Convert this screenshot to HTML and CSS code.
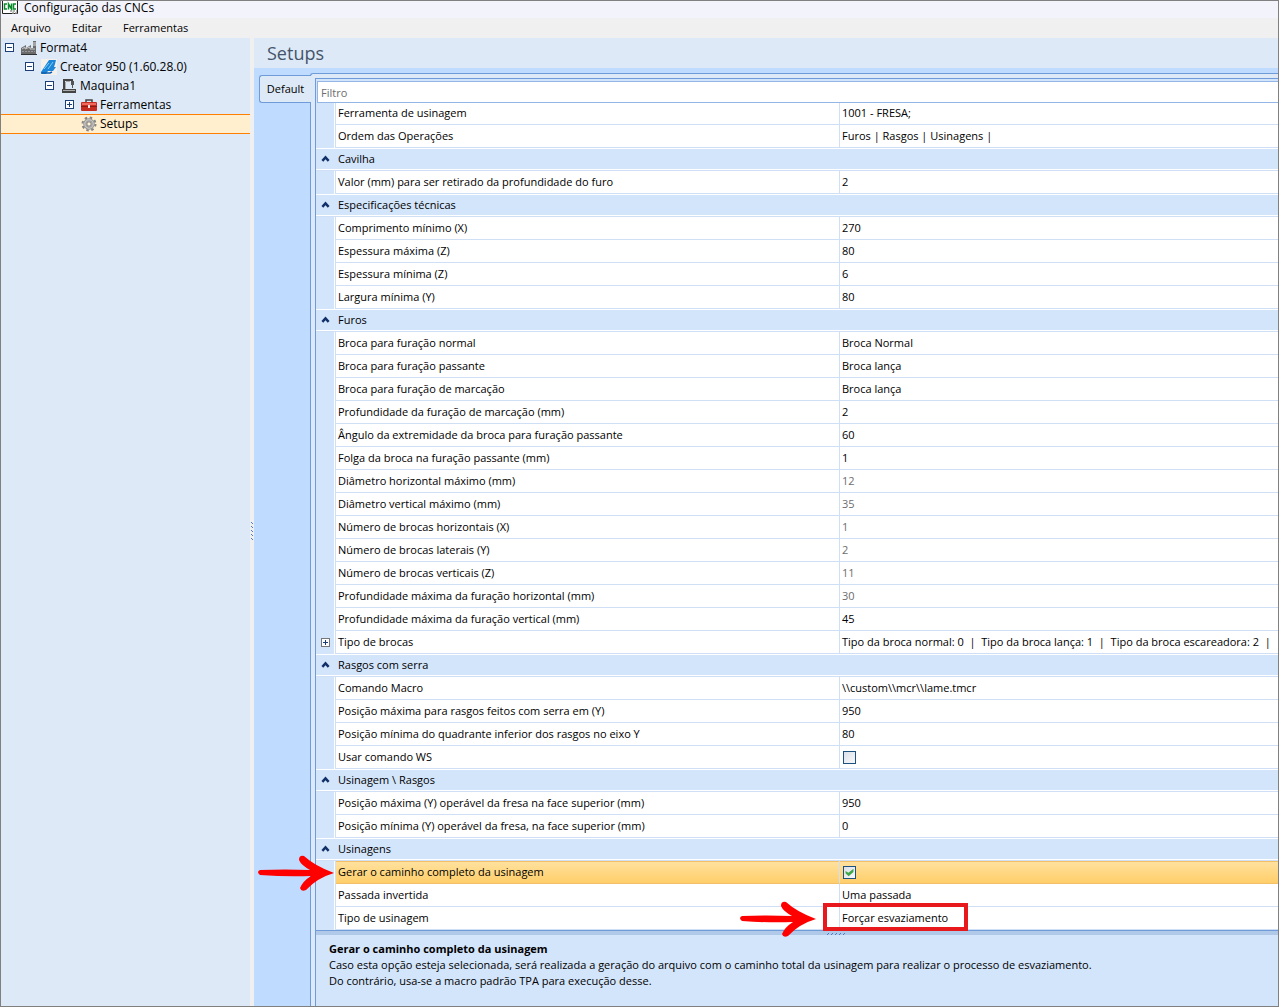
FILE: index.html
```html
<!DOCTYPE html>
<html lang="pt-BR">
  <head>
    <meta charset="utf-8">
    <meta name="viewport" content="width=device-width, initial-scale=1">
    <title>Configuração das CNCs</title>
    <link rel="stylesheet" href="styles.css">
  </head>
  <body>
    <header class="titlebar">
      <svg width="16" height="13" viewBox="0 0 16 13" aria-hidden="true">
        <path d="M0 0v12.500h16V0" fill="#fff"/>
        <path d="M.5 0v12.500h15V0" fill="none" stroke="#222"/>
        <path d="M5 3H2.500v5H5M6.500 8.500V3L9.500 8V2.500M14 3h-2.500v5H14" fill="none" stroke="#0a8a2a" stroke-width="1.500"/>
        <path d="M8 10h7M10 12h5" stroke="#999" stroke-width="1.500" stroke-dasharray="2 1"/>
      </svg>
      <span>Configuração das CNCs</span>
    </header>

    <nav class="menubar">
      <button type="button">Arquivo</button>
      <button type="button">Editar</button>
      <button type="button">Ferramentas</button>
    </nav>

    <main class="workspace">
      <aside class="tree">
        <ul>
          <li>
            <button type="button" class="toggle" aria-label="Recolher Format4"></button>
            <svg width="16" height="16" viewBox="0 0 16 16" aria-hidden="true">
              <path d="M0 15V8l5-3v3l5-3v3h2V1h3v14z" fill="#6b6b6b"/>
              <path d="M1 9l3-2v2l5-2v2h5" fill="none" stroke="#c8c8c8"/>
              <path d="M12 3h3M12 5h3" stroke="#ddd"/>
              <path d="M1 11.500h13" stroke="#999" stroke-dasharray="2 1"/>
              <path d="M0 14.500h16" stroke="#333"/>
            </svg>
            <a href="#format4">Format4</a>
          </li>
          <li class="level-1">
            <button type="button" class="toggle" aria-label="Recolher Creator 950"></button>
            <svg width="16" height="16" viewBox="0 0 16 16" aria-hidden="true">
              <path d="M0 0h16v16H0z" fill="#f4f1ec"/>
              <path d="M0 13L8 1h7l-1 4-1 3h2l-3 4H7l-2 3H1z" fill="#1c86d8"/>
              <path d="M3 10l5-6M7 10l5-7" stroke="#7fd0f7"/>
              <path d="M0 14h9l2-1" fill="none" stroke="#0f5fae" stroke-width="1.500"/>
            </svg>
            <a href="#creator">Creator 950 (1.60.28.0)</a>
          </li>
          <li class="level-2">
            <button type="button" class="toggle" aria-label="Recolher Maquina1"></button>
            <svg width="16" height="16" viewBox="0 0 16 16" aria-hidden="true">
              <path d="M3 12V2h8v3" fill="none" stroke="#444" stroke-width="2"/>
              <path d="M10 3h3v4h-1v3h-1V7h-1z" fill="#555"/>
              <path d="M5 3.500h4M4.500 4v7" stroke="#aaa"/>
              <path d="M1 11h14v4H1z" fill="#444"/>
              <path d="M2 12.500h12" stroke="#aaa"/>
            </svg>
            <a href="#maquina">Maquina1</a>
          </li>
          <li class="level-3">
            <button type="button" class="toggle plus" aria-label="Expandir Ferramentas"></button>
            <svg width="16" height="16" viewBox="0 0 16 16" aria-hidden="true">
              <path d="M5 5V3h6v2" fill="none" stroke="#444" stroke-width="1.500"/>
              <rect x="0" y="5" width="16" height="9" rx="1" fill="#c62c22"/>
              <path d="M1 6h14v2H1z" fill="#ef6a5c"/>
              <path d="M0 9.500h16" stroke="#8d1912"/>
              <path d="M7 8h2v3H7z" fill="#e8e8e8"/>
            </svg>
            <a href="#ferramentas">Ferramentas</a>
          </li>
          <li class="level-3 selected">
            <span class="toggle-space"></span>
            <svg width="16" height="16" viewBox="0 0 16 16" aria-hidden="true">
              <circle cx="8" cy="8" r="6.500" fill="none" stroke="#858585" stroke-width="2" stroke-dasharray="2.500 2.600"/>
              <circle cx="8" cy="8" r="4.200" fill="none" stroke="#8a8a8a" stroke-width="3"/>
              <circle cx="8" cy="8" r="4.200" fill="none" stroke="#c4c4c4" stroke-width="1.500"/>
              <circle cx="8" cy="8" r="2.200" fill="#fff3dd" stroke="#777"/>
            </svg>
            <a href="#setups">Setups</a>
          </li>
        </ul>
      </aside>

      <div class="splitter">
        <svg width="4" height="20" viewBox="0 0 4 20" aria-hidden="true">
          <path d="M1.500 0v20" stroke="#4a7fc8" stroke-dasharray="1 3"/>
          <path d="M2.500 1v19" stroke="#4a7fc8" stroke-dasharray="1 3"/>
        </svg>
      </div>

      <section class="setups">
        <h1>Setups</h1>
        <div class="tabs">
          <div class="tab-strip">
            <button type="button" class="tab">Default</button>
          </div>
          <div class="tab-page">
            <div class="property-grid">
              <input type="text" class="filter" placeholder="Filtro" aria-label="Filtro">
              <table>
                <colgroup>
                  <col class="col-gutter">
                  <col class="col-name">
                  <col>
                </colgroup>
                <tbody>
                  <tr><td></td><th>Ferramenta de usinagem</th><td>1001 - FRESA;</td></tr>
                  <tr><td></td><th>Ordem das Operações</th><td>Furos | Rasgos | Usinagens |</td></tr>
                </tbody>
                <tbody>
                  <tr class="category"><td><button type="button" class="chevron" aria-label="Recolher Cavilha"></button></td><th colspan="2">Cavilha</th></tr>
                  <tr><td></td><th>Valor (mm) para ser retirado da profundidade do furo</th><td>2</td></tr>
                </tbody>
                <tbody>
                  <tr class="category"><td><button type="button" class="chevron" aria-label="Recolher Especificações técnicas"></button></td><th colspan="2">Especificações técnicas</th></tr>
                  <tr><td></td><th>Comprimento mínimo (X)</th><td>270</td></tr>
                  <tr><td></td><th>Espessura máxima (Z)</th><td>80</td></tr>
                  <tr><td></td><th>Espessura mínima (Z)</th><td>6</td></tr>
                  <tr><td></td><th>Largura mínima (Y)</th><td>80</td></tr>
                </tbody>
                <tbody>
                  <tr class="category"><td><button type="button" class="chevron" aria-label="Recolher Furos"></button></td><th colspan="2">Furos</th></tr>
                  <tr><td></td><th>Broca para furação normal</th><td>Broca Normal</td></tr>
                  <tr><td></td><th>Broca para furação passante</th><td>Broca lança</td></tr>
                  <tr><td></td><th>Broca para furação de marcação</th><td>Broca lança</td></tr>
                  <tr><td></td><th>Profundidade da furação de marcação (mm)</th><td>2</td></tr>
                  <tr><td></td><th>Ângulo da extremidade da broca para furação passante</th><td>60</td></tr>
                  <tr><td></td><th>Folga da broca na furação passante (mm)</th><td>1</td></tr>
                  <tr class="readonly"><td></td><th>Diâmetro horizontal máximo (mm)</th><td>12</td></tr>
                  <tr class="readonly"><td></td><th>Diâmetro vertical máximo (mm)</th><td>35</td></tr>
                  <tr class="readonly"><td></td><th>Número de brocas horizontais (X)</th><td>1</td></tr>
                  <tr class="readonly"><td></td><th>Número de brocas laterais (Y)</th><td>2</td></tr>
                  <tr class="readonly"><td></td><th>Número de brocas verticais (Z)</th><td>11</td></tr>
                  <tr class="readonly"><td></td><th>Profundidade máxima da furação horizontal (mm)</th><td>30</td></tr>
                  <tr><td></td><th>Profundidade máxima da furação vertical (mm)</th><td>45</td></tr>
                  <tr><td><button type="button" class="toggle plus" aria-label="Expandir Tipo de brocas"></button></td><th>Tipo de brocas</th><td>Tipo da broca normal: 0&nbsp; |&nbsp; Tipo da broca lança: 1&nbsp; |&nbsp; Tipo da broca escareadora: 2&nbsp; |</td></tr>
                </tbody>
                <tbody>
                  <tr class="category"><td><button type="button" class="chevron" aria-label="Recolher Rasgos com serra"></button></td><th colspan="2">Rasgos com serra</th></tr>
                  <tr><td></td><th>Comando Macro</th><td>\\custom\\mcr\\lame.tmcr</td></tr>
                  <tr><td></td><th>Posição máxima para rasgos feitos com serra em (Y)</th><td>950</td></tr>
                  <tr><td></td><th>Posição mínima do quadrante inferior dos rasgos no eixo Y</th><td>80</td></tr>
                  <tr><td></td><th><label for="usar-ws">Usar comando WS</label></th><td><input type="checkbox" id="usar-ws"></td></tr>
                </tbody>
                <tbody>
                  <tr class="category"><td><button type="button" class="chevron" aria-label="Recolher Usinagem e Rasgos"></button></td><th colspan="2">Usinagem \ Rasgos</th></tr>
                  <tr><td></td><th>Posição máxima (Y) operável da fresa na face superior (mm)</th><td>950</td></tr>
                  <tr><td></td><th>Posição mínima (Y) operável da fresa, na face superior (mm)</th><td>0</td></tr>
                </tbody>
                <tbody>
                  <tr class="category"><td><button type="button" class="chevron" aria-label="Recolher Usinagens"></button></td><th colspan="2">Usinagens</th></tr>
                  <tr class="active">
                    <td></td>
                    <th>
                      <label for="caminho">Gerar o caminho completo da usinagem</label>
                      <svg class="arrow" width="78" height="38" viewBox="0 0 78 38" aria-hidden="true">
                        <path d="M3 16Q28 15 53 16Q44 11 42 6Q42 1 47 2Q58 12 77 19Q60 24 49 36Q44 38 43 34Q46 27 54 22Q30 23 3 21Q-1 18 3 16z"/>
                      </svg>
                    </th>
                    <td><input type="checkbox" id="caminho" checked></td>
                  </tr>
                  <tr><td></td><th>Passada invertida</th><td>Uma passada</td></tr>
                  <tr>
                    <td></td>
                    <th>Tipo de usinagem</th>
                    <td>
                      Forçar esvaziamento
                      <svg class="arrow" width="78" height="38" viewBox="0 0 78 38" aria-hidden="true">
                        <path d="M3 16Q28 15 53 16Q44 11 42 6Q42 1 47 2Q58 12 77 19Q60 24 49 36Q44 38 43 34Q46 27 54 22Q30 23 3 21Q-1 18 3 16z"/>
                      </svg>
                      <span class="marker"></span>
                    </td>
                  </tr>
                </tbody>
              </table>
              <div class="help-splitter">
                <svg width="20" height="3" viewBox="0 0 20 3" aria-hidden="true">
                  <path d="M0 2.500h20" stroke="#4a7fc8" stroke-dasharray="1 3"/>
                  <path d="M1 1.500h19" stroke="#4a7fc8" stroke-dasharray="1 3"/>
                </svg>
              </div>
              <div class="help">
                <h2>Gerar o caminho completo da usinagem</h2>
                <p>Caso esta opção esteja selecionada, será realizada a geração do arquivo com o caminho total da usinagem para realizar o processo de esvaziamento.</p>
                <p>Do contrário, usa-se a macro padrão TPA para execução desse.</p>
              </div>
            </div>
          </div>
        </div>
      </section>
    </main>
  </body>
</html>
```

FILE: styles.css
```css
* {
  box-sizing: border-box;
}

body {
  margin: 0;
  min-height: 100vh;
  display: flex;
  flex-direction: column;
  border: 1px solid #808080;
  font-family: "Open Sans", "Noto Sans", sans-serif;
  font-size: 11px;
  line-height: 16px;
  color: #000;
  background: #dde9f7;
}

button, input {
  font: inherit;
  color: inherit;
  margin: 0;
}
button {
  padding: 0;
  border: none;
  background: none;
}
svg {
  display: block;
  flex-shrink: 0;
}

.titlebar {
  display: flex;
  align-items: center;
  gap: 6px;
  height: 17px;
  padding: 0 1px 4px;
  font-size: 12px;
  background: #f3f3fb;
}

.menubar {
  display: flex;
  gap: 21px;
  height: 20px;
  padding: 0 10px;
  background: #f0f0f0;
}

.workspace {
  flex: 1;
  display: flex;
}

/* tree */
.tree {
  width: 249px;
  flex-shrink: 0;
  background: #dde9f7;
}
.tree ul {
  margin: 0;
  padding: 0;
  list-style: none;
}
.tree li {
  display: flex;
  align-items: center;
  height: 19px;
  padding-left: 4px;
}
.tree li svg {
  margin: 0 3px 0 7px;
}
.tree a {
  color: inherit;
  text-decoration: none;
  font-size: 12px;
}
.tree .level-1 {
  padding-left: 24px;
}
.tree .level-2 {
  padding-left: 44px;
}
.tree .level-3 {
  padding-left: 64px;
}
.tree .selected {
  height: 20px;
  border: solid #ff7f00;
  border-width: 1px 0;
  background: #ffefcf;
}

.toggle {
  width: 9px;
  height: 9px;
  flex-shrink: 0;
  border: 1px solid #1c3f78;
  background: linear-gradient(#1c3f78, #1c3f78) center / 5px 1px no-repeat #fff;
}
.toggle.plus {
  background: linear-gradient(#1c3f78, #1c3f78) center / 5px 1px no-repeat,
    linear-gradient(#1c3f78, #1c3f78) center / 1px 5px no-repeat #fff;
}
.toggle-space {
  width: 9px;
}

.splitter {
  display: flex;
  align-items: center;
  width: 4px;
  flex-shrink: 0;
  padding-top: 20px;
  background: #f0f0f0;
}

/* right side */
.setups {
  flex: 1;
  min-width: 0;
  display: flex;
  flex-direction: column;
  background: #bfdbff;
}
h1 {
  margin: 0;
  height: 30px;
  padding: 0 13px;
  font-size: 18px;
  font-weight: normal;
  line-height: 30px;
  color: #44546a;
  background: #dde9f7;
}
.tabs {
  flex: 1;
  display: flex;
  padding-top: 5px;
}
.tab-strip {
  width: 56px;
  flex-shrink: 0;
  padding: 2px 0 0 5px;
}
.tab {
  position: relative;
  display: block;
  width: 52px;
  height: 28px;
  border: 1px solid #6f9bd8;
  border-right: none;
  border-radius: 3px 0 0 3px;
  background: #dde9f7;
}
.tab-page {
  flex: 1;
  min-width: 0;
  display: flex;
  padding: 4px 0 0 4px;
  border: solid #6f9bd8;
  border-width: 1px 0 0 1px;
  border-top-left-radius: 3px;
  background: #dde9f7;
}
.property-grid {
  flex: 1;
  min-width: 0;
  display: flex;
  flex-direction: column;
  padding-top: 2px;
  border: solid #6f9bd8;
  border-width: 1px 0 0 1px;
  background: #d3e5fb;
}
.filter {
  position: relative;
  z-index: 1;
  height: 22px;
  margin: 0 0 -1px 1px;
  padding: 0 3px;
  border: 1px solid #94b6e6;
  border-right: none;
  border-radius: 0;
  outline: none;
  background: #fff;
}
.filter::placeholder {
  color: #6d6d6d;
  opacity: 1;
}

table {
  width: 100%;
  table-layout: fixed;
  border-spacing: 0;
}
.col-gutter {
  width: 20px;
}
.col-name {
  width: 504px;
}
th, td {
  position: relative;
  height: 23px;
  padding: 0 2px;
  border: solid #cfdff5;
  border-width: 0 0 1px;
  font-weight: normal;
  text-align: left;
  white-space: nowrap;
  background: #fff;
}
th {
  border-right-width: 1px;
}
td:first-child {
  padding: 0 0 0 5px;
  border-width: 0 1px 0 0;
  box-shadow: inset -1px 0 #fff;
  background: #d3e5fb;
}
td .toggle, td .chevron {
  display: block;
}
td .toggle {
  border-color: #777;
}
.category th, .category td {
  border-width: 0 0 1px;
  box-shadow: inset 0 1px #fff, inset 0 -1px #fff;
  background: #d3e5fb;
}
.readonly td {
  color: #6d6d6d;
}
.active th, .active td:last-child {
  border-bottom-color: #f3c068;
  background: linear-gradient(#ffe2a0, #ffce69);
  box-shadow: inset 0 1px #f3c068;
}
.chevron {
  width: 9px;
  height: 9px;
  background: #12316b;
  clip-path: polygon(50% 12%, 95% 60%, 75% 80%, 50% 54%, 25% 80%, 5% 60%);
}

input[type="checkbox"] {
  appearance: none;
  display: block;
  width: 13px;
  height: 13px;
  margin-left: 1px;
  border: 1px solid #1c5180;
  background: linear-gradient(135deg, #dbe1ea, #f8f8f8);
}
input[type="checkbox"]:checked::before {
  content: "";
  display: block;
  height: 11px;
  background: #3fa648;
  clip-path: polygon(14% 40%, 40% 56%, 86% 20%, 86% 50%, 42% 88%, 14% 62%);
}

/* callouts */
.arrow {
  position: absolute;
  z-index: 1;
  top: -7px;
  right: 100%;
  fill: #fe0000;
}
th .arrow {
  right: auto;
  left: -79px;
}
td .arrow {
  margin-right: 23px;
}
.marker {
  position: absolute;
  z-index: 1;
  top: -4px;
  left: -17px;
  width: 145px;
  height: 28px;
  border: 4px solid #e8191c;
}

.help-splitter {
  display: flex;
  justify-content: center;
  height: 5px;
  padding: 1px 0 0 80px;
  border-top: 1px solid #6f9bd8;
  background: #b1c9e8;
}
.help {
  flex: 1;
  padding: 6px 13px;
}
.help h2, .help p {
  margin: 0;
  font-size: 11px;
}
```
